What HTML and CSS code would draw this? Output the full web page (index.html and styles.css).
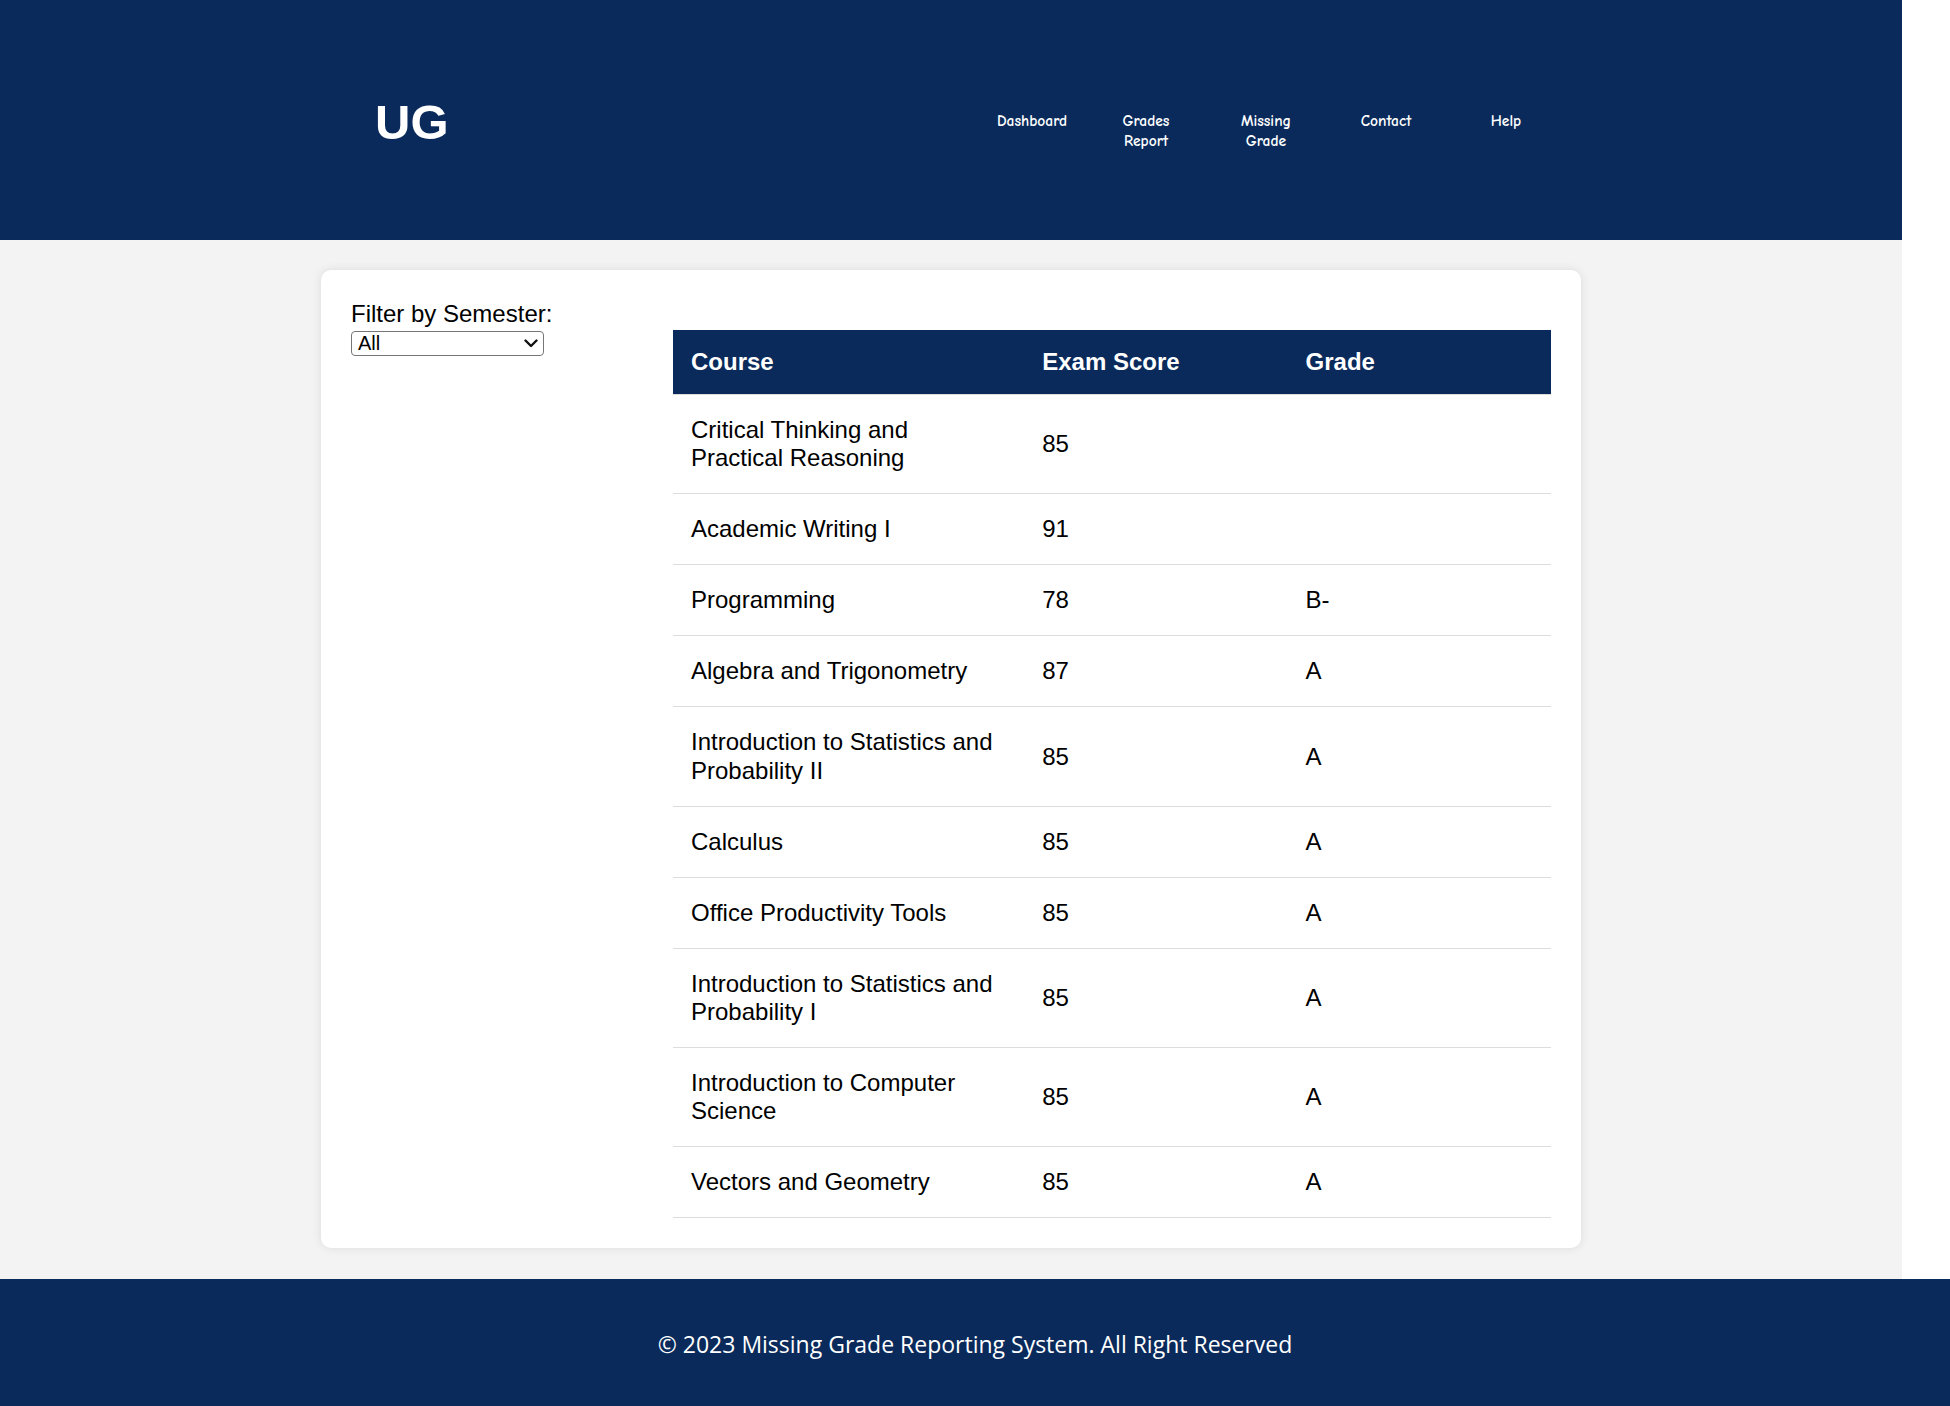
FILE: index.html
```html
<!DOCTYPE html>
<html lang="en">
<head>
<meta charset="utf-8">
<title>Missing Grade Reporting System</title>
<link rel="stylesheet" href="styles.css">
</head>
<body>
<header class="site-header">
  <div class="logo">UG</div>
  <nav class="nav">
    <ul class="nav-list">
      <li class="nav-item nav-item-first"><a href="#">Dashboard</a></li>
      <li class="nav-item"><a href="#">Grades Report</a></li>
      <li class="nav-item"><a href="#">Missing Grade</a></li>
      <li class="nav-item"><a href="#">Contact</a></li>
      <li class="nav-item"><a href="#">Help</a></li>
    </ul>
  </nav>
</header>
<main class="main">
  <section class="card">
    <div class="filter">
      <label class="filter-label" for="semester">Filter by Semester:</label>
      <div class="select-box">
        <select class="filter-select" id="semester">
          <option>All</option>
          <option>Semester 1</option>
          <option>Semester 2</option>
        </select>
        <svg class="select-chevron" width="14" height="9" viewBox="0 0 14 9" aria-hidden="true">
          <path d="M1.5 1.5 L7 7 L12.5 1.5" fill="none" stroke="#111111" stroke-width="2.4" stroke-linecap="round" stroke-linejoin="round"/>
        </svg>
      </div>
    </div>
    <div class="table-wrap">
      <table class="grades">
        <colgroup>
          <col class="col-course">
          <col class="col-score">
          <col class="col-grade">
        </colgroup>
        <thead>
          <tr><th>Course</th><th>Exam Score</th><th>Grade</th></tr>
        </thead>
        <tbody>
          <tr><td>Critical Thinking and Practical Reasoning</td><td>85</td><td></td></tr>
          <tr><td>Academic Writing I</td><td>91</td><td></td></tr>
          <tr><td>Programming</td><td>78</td><td>B-</td></tr>
          <tr><td>Algebra and Trigonometry</td><td>87</td><td>A</td></tr>
          <tr><td>Introduction to Statistics and Probability II</td><td>85</td><td>A</td></tr>
          <tr><td>Calculus</td><td>85</td><td>A</td></tr>
          <tr><td>Office Productivity Tools</td><td>85</td><td>A</td></tr>
          <tr><td>Introduction to Statistics and Probability I</td><td>85</td><td>A</td></tr>
          <tr><td>Introduction to Computer Science</td><td>85</td><td>A</td></tr>
          <tr><td>Vectors and Geometry</td><td>85</td><td>A</td></tr>
        </tbody>
      </table>
    </div>
  </section>
</main>
<footer class="site-footer">
  <p class="footer-text">© 2023 Missing Grade Reporting System. All Right Reserved</p>
</footer>
</body>
</html>
```

FILE: styles.css
```css
html, body {
  margin: 0;
  padding: 0;
  background: #ffffff;
}

body {
  font-family: "Liberation Sans", Arial, sans-serif;
  color: #000000;
}

.site-header {
  width: 1902px;
  height: 240px;
  box-sizing: border-box;
  background: #092a5b;
  display: flex;
  align-items: flex-start;
  padding: 93px 356px 0 375px;
}

.logo {
  font-family: "Liberation Sans", Arial, sans-serif;
  font-weight: bold;
  font-size: 49px;
  line-height: 58px;
  color: #ffffff;
}

.nav {
  margin-left: auto;
  margin-top: 18px;
}

.nav-list {
  list-style: none;
  margin: 0;
  padding: 0;
  display: flex;
  gap: 40px;
}

.nav-item {
  width: 80px;
  text-align: center;
  font-family: "Comic Sans MS", "Comic Neue", cursive;
  font-size: 15.5px;
  font-weight: bold;
  line-height: 20px;
}

.nav-item-first {
  margin-right: -6px;
}

.nav-item a {
  color: #ffffff;
  text-decoration: none;
}

.main {
  width: 1902px;
  background: #f3f3f3;
  padding: 30px 0 31px;
  box-sizing: border-box;
}

.card {
  width: 1260px;
  margin: 0 auto;
  box-sizing: border-box;
  background: #ffffff;
  border-radius: 10px;
  box-shadow: 0 0 10px rgba(0, 0, 0, 0.1);
  padding: 30px;
  display: flex;
}

.filter {
  width: 322px;
  flex: none;
}

.filter-label {
  display: block;
  font-size: 24px;
  line-height: 27.6px;
}

.select-box {
  position: relative;
  width: 193px;
  margin-top: 3px;
}

.filter-select {
  display: block;
  width: 193px;
  height: 25px;
  font-family: "Liberation Sans", Arial, sans-serif;
  font-size: 20px;
  line-height: 23px;
  color: #000000;
  border: 1px solid #767676;
  border-radius: 4px;
  background: #ffffff;
  padding: 0 24px 0 6px;
  appearance: none;
  -webkit-appearance: none;
}

.select-chevron {
  position: absolute;
  right: 6px;
  top: 8px;
  pointer-events: none;
}

.table-wrap {
  flex: 1;
  padding-top: 30px;
}

.grades {
  width: 100%;
  border-collapse: collapse;
  font-size: 24px;
}

.col-course { width: 40%; }
.col-score { width: 30%; }
.col-grade { width: 30%; }

.grades th {
  background: #092a5b;
  color: #ffffff;
  font-weight: bold;
  text-align: left;
  line-height: 28px;
  padding: 18px;
  border-bottom: 1px solid #dddddd;
}

.grades td {
  text-align: left;
  vertical-align: middle;
  line-height: 28.1px;
  padding: 21px 18px;
  border-bottom: 1px solid #dddddd;
}

.site-footer {
  width: 1950px;
  background: #092a5b;
  padding: 49px 0 61px;
  text-align: center;
}

.footer-text {
  margin: 0;
  font-family: "Open Sans", "Noto Sans", sans-serif;
  font-size: 23px;
  line-height: 32px;
  color: #ffffff;
}
```
